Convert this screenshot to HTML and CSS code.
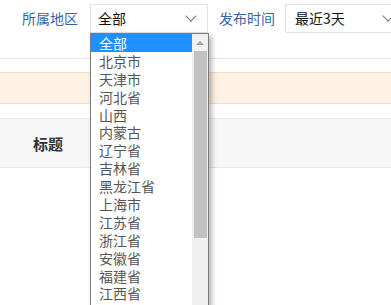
FILE: index.html
```html
<!DOCTYPE html>
<html lang="zh-CN">
<head>
  <meta charset="UTF-8">
  <meta name="viewport" content="width=device-width, initial-scale=1.0">
  <title>信息筛选</title>
  <link rel="stylesheet" href="styles.css">
</head>
<body>
  <div class="filters">
    <span class="filter-label">所属地区</span>
    <div class="select select-area">
      <span class="select-value">全部</span>
      <span class="chevron"></span>
      <ul class="options">
        <li class="option selected">全部</li>
        <li class="option">北京市</li>
        <li class="option">天津市</li>
        <li class="option">河北省</li>
        <li class="option">山西</li>
        <li class="option">内蒙古</li>
        <li class="option">辽宁省</li>
        <li class="option">吉林省</li>
        <li class="option">黑龙江省</li>
        <li class="option">上海市</li>
        <li class="option">江苏省</li>
        <li class="option">浙江省</li>
        <li class="option">安徽省</li>
        <li class="option">福建省</li>
        <li class="option">江西省</li>
      </ul>
      <div class="scrollbar">
        <span class="scroll-up"></span>
        <span class="scroll-thumb"></span>
      </div>
    </div>
    <span class="filter-label">发布时间</span>
    <div class="select select-time">
      <span class="select-value">最近3天</span>
      <span class="chevron"></span>
    </div>
  </div>

  <div class="notice"></div>

  <div class="table-head">
    <span class="col-title">标题</span>
  </div>
</body>
</html>
```

FILE: styles.css
```css
body {
  margin: 0;
  width: 391px;
  height: 305px;
  font-family: "Noto Sans CJK SC", "Microsoft YaHei", sans-serif;
  font-size: 14px;
  color: #333;
  background: #fff;
}

.filters {
  display: flex;
  align-items: flex-start;
  height: 59px;
  padding: 4px 0 0 22px;
  border-bottom: 1px solid #e6e6e6;
  box-sizing: border-box;
  white-space: nowrap;
}

.filter-label {
  color: #3565a0;
  line-height: 29px;
  margin-right: 12px;
}

.select {
  position: relative;
  display: flex;
  align-items: center;
  flex-shrink: 0;
  height: 29px;
  border: 1px solid #e3e3e3;
  box-sizing: border-box;
  padding-left: 7px;
}

.select-area {
  width: 118px;
  margin-right: 11px;
}

.select-time {
  width: 120px;
  margin-left: -2px;
  padding-left: 9px;
}

.select-value {
  flex: 1;
  color: #111;
  line-height: 27px;
}

.chevron {
  width: 7px;
  height: 7px;
  margin: -5px 12px 0 0;
  border-right: 1px solid #777;
  border-bottom: 1px solid #777;
  transform: rotate(45deg);
}

.options {
  position: absolute;
  top: 28px;
  left: -1px;
  width: 119px;
  height: 273px;
  margin: 0;
  padding: 0 16px 0 0;
  list-style: none;
  background: #fff;
  border: 1px solid #7a7a7a;
  border-bottom: 0;
  box-sizing: border-box;
  box-shadow: 3px 3px 5px rgba(0, 0, 0, 0.28);
  overflow: hidden;
  z-index: 5;
}

.option {
  height: 17.9px;
  line-height: 18px;
  padding-left: 8px;
  color: #555;
}

.option.selected {
  background: #1e90ff;
  color: #fff;
}

.scrollbar {
  position: absolute;
  top: 29px;
  left: 101px;
  width: 16px;
  height: 272px;
  background: #f0f0f0;
  display: flex;
  flex-direction: column;
  align-items: center;
  z-index: 6;
}

.scroll-up {
  margin-top: 7px;
  width: 0;
  height: 0;
  border-left: 4px solid transparent;
  border-right: 4px solid transparent;
  border-bottom: 4px solid #a3a3a3;
}

.scroll-thumb {
  margin-top: 6px;
  width: 13px;
  height: 187px;
  background: #c1c1c1;
}

.notice {
  margin-top: 13px;
  height: 32px;
  background: #fdf1e4;
  border-top: 1px solid #f6ddc0;
  border-bottom: 1px solid #f6ddc0;
  box-sizing: border-box;
}

.table-head {
  margin-top: 14px;
  height: 50px;
  display: flex;
  align-items: center;
  padding-left: 33px;
  background: #f7f7f7;
  border-top: 1px solid #ebebeb;
  border-bottom: 1px solid #e6e6e6;
  box-sizing: border-box;
}

.col-title {
  font-weight: bold;
  font-size: 15px;
  color: #333;
}
```
